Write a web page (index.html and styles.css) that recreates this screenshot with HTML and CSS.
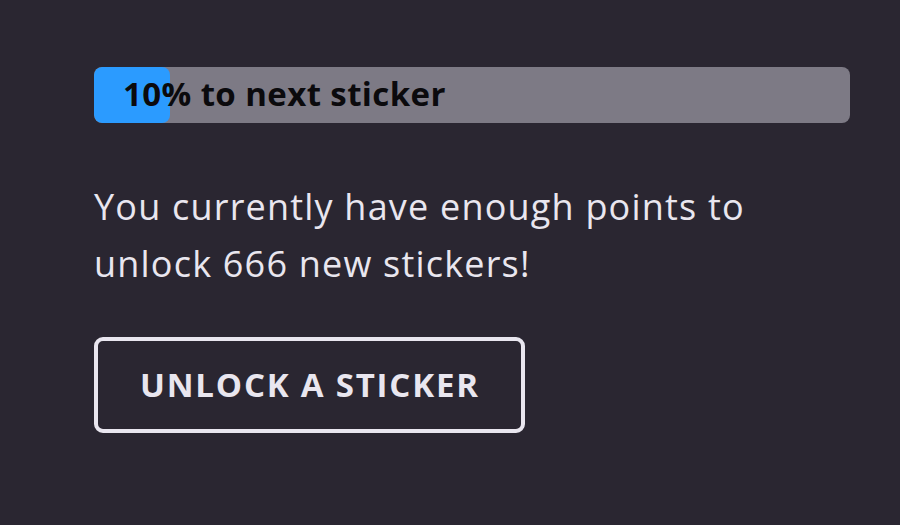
FILE: index.html
```html
<!DOCTYPE html>
<html lang="en">

<head>
  <meta charset="UTF-8">
  <meta name="viewport" content="width=device-width, initial-scale=1.0">
  <title>Stickers</title>
  <link rel="stylesheet" href="styles.css">
</head>

<body>
  <div class="container">
    <!-- progress towards the next sticker -->
    <div class="progress">
      <div class="progress-fill" style="width: 10%;"></div>
      <span class="progress-label">10% to next sticker</span>
    </div>

    <p class="points">You currently have enough points to unlock 666 new stickers!</p>

    <button class="btn">UNLOCK A STICKER</button>
  </div>
</body>

</html>
```

FILE: styles.css
```css
body {
  margin: 0;
  padding: 0;
  font-family: 'Open Sans', 'Noto Sans', sans-serif;
  background-color: #2a2631;
  color: #e9e6ef;
  height: 100vh;
  overflow: hidden;
}

.container {
  padding: 67px 50px 0 94px;
}

.progress {
  position: relative;
  height: 56px;
  background-color: #7d7a85;
  border-radius: 8px;
  overflow: hidden;
}

.progress-fill {
  height: 100%;
  background-color: #2b9bff;
  border-radius: 8px;
}

.progress-label {
  position: absolute;
  top: 0;
  left: 29px;
  line-height: 54px;
  font-size: 33px;
  font-weight: 700;
  letter-spacing: 0.4px;
  color: #0b0a0d;
}

.points {
  margin: 55px 0 0;
  max-width: 700px;
  font-size: 36px;
  line-height: 57px;
  letter-spacing: 1.2px;
}

.btn {
  margin-top: 45px;
  padding: 22px 41px 22px 42px;
  background: transparent;
  color: #e9e6ef;
  border: 4px solid #e9e6ef;
  border-radius: 9px;
  font-family: inherit;
  font-size: 33px;
  font-weight: 700;
  letter-spacing: 1.8px;
  line-height: 44px;
}
```
